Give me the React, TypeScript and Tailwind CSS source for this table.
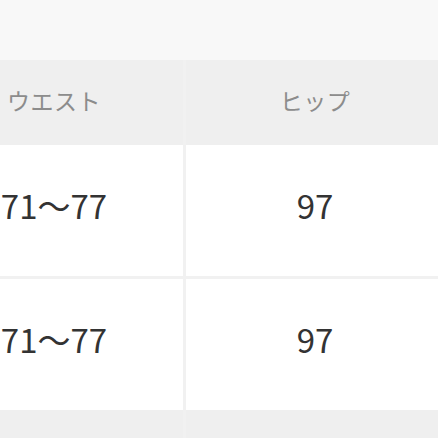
import React from "react";

const rows = [
  { waist: "71〜77", hip: "97" },
  { waist: "71〜77", hip: "97" },
];

const App: React.FC = () => {
  return (
    <div
      className="w-[438px] h-[438px] overflow-hidden bg-white"
      style={{ fontFamily: '"Noto Sans CJK JP", "Noto Sans", sans-serif' }}
    >
      <div className="ml-[-75px] w-[600px] grid grid-cols-[258px_258px_81px] gap-x-[3px] bg-[#f1f1f1]">
        {/* top strip */}
        <div className="col-span-3 h-[60px] bg-[#f8f8f8]" />

        {/* header */}
        <div className="h-[85px] pb-[4px] bg-[#efefef] flex items-center justify-center text-[23px] tracking-[0.5px] text-[#8c8c8c]">
          ウエスト
        </div>
        <div className="h-[85px] pb-[4px] bg-[#efefef] flex items-center justify-center text-[23px] tracking-[0.5px] text-[#8c8c8c]">
          ヒップ
        </div>
        <div className="h-[85px] bg-[#efefef]" />

        {/* body */}
        {rows.map((r, i) => (
          <React.Fragment key={i}>
            <div
              className={`h-[131px] pb-[9px] bg-white flex items-center justify-center text-[33px] text-[#333333] ${
                i > 0 ? "mt-[3px]" : ""
              }`}
            >
              {r.waist}
            </div>
            <div
              className={`h-[131px] pb-[9px] bg-white flex items-center justify-center text-[33px] text-[#333333] ${
                i > 0 ? "mt-[3px]" : ""
              }`}
            >
              {r.hip}
            </div>
            <div className={`h-[131px] bg-white ${i > 0 ? "mt-[3px]" : ""}`} />
          </React.Fragment>
        ))}

        {/* next row */}
        <div className="h-[40px] bg-[#efefef]" />
        <div className="h-[40px] bg-[#efefef]" />
        <div className="h-[40px] bg-[#efefef]" />
      </div>
    </div>
  );
};

export default App;
